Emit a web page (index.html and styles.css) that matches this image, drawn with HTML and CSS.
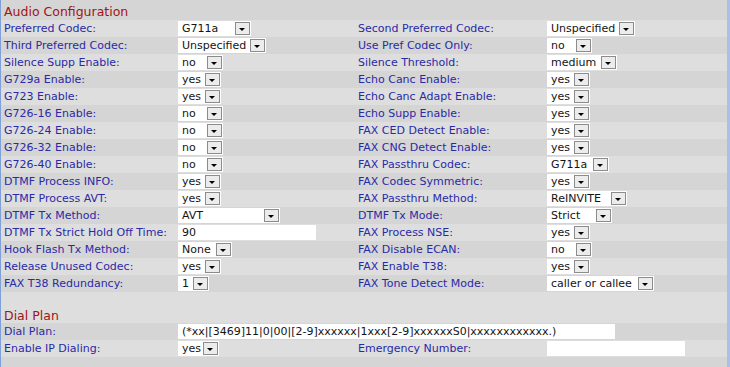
FILE: index.html
```html
<!DOCTYPE html>
<html>

<head>
    <meta name="viewport" content="width=device-width, initial-scale=1">
    <title>Audio Configuration</title>

    <link rel="stylesheet" href="styles.css">

</head>

<body>
    <div class="page">

        <div class="section">
            <div class="head top">Audio Configuration</div>

            <div class="rows">
                <div class="row">
                    <span class="lbl">Preferred Codec:</span>
                    <span class="val"><span class="sel w73">G711a<i class="arr"></i></span></span>
                    <span class="lbl">Second Preferred Codec:</span>
                    <span class="val"><span class="sel w88">Unspecified<i class="arr"></i></span></span>
                </div>
                <div class="row">
                    <span class="lbl">Third Preferred Codec:</span>
                    <span class="val"><span class="sel w88">Unspecified<i class="arr"></i></span></span>
                    <span class="lbl">Use Pref Codec Only:</span>
                    <span class="val"><span class="sel w45">no<i class="arr"></i></span></span>
                </div>
                <div class="row">
                    <span class="lbl">Silence Supp Enable:</span>
                    <span class="val"><span class="sel w45">no<i class="arr"></i></span></span>
                    <span class="lbl">Silence Threshold:</span>
                    <span class="val"><span class="sel w70">medium<i class="arr"></i></span></span>
                </div>
                <div class="row">
                    <span class="lbl">G729a Enable:</span>
                    <span class="val"><span class="sel w43">yes<i class="arr"></i></span></span>
                    <span class="lbl">Echo Canc Enable:</span>
                    <span class="val"><span class="sel w43">yes<i class="arr"></i></span></span>
                </div>
                <div class="row">
                    <span class="lbl">G723 Enable:</span>
                    <span class="val"><span class="sel w43">yes<i class="arr"></i></span></span>
                    <span class="lbl">Echo Canc Adapt Enable:</span>
                    <span class="val"><span class="sel w43">yes<i class="arr"></i></span></span>
                </div>
                <div class="row">
                    <span class="lbl">G726-16 Enable:</span>
                    <span class="val"><span class="sel w45">no<i class="arr"></i></span></span>
                    <span class="lbl">Echo Supp Enable:</span>
                    <span class="val"><span class="sel w43">yes<i class="arr"></i></span></span>
                </div>
                <div class="row">
                    <span class="lbl">G726-24 Enable:</span>
                    <span class="val"><span class="sel w45">no<i class="arr"></i></span></span>
                    <span class="lbl">FAX CED Detect Enable:</span>
                    <span class="val"><span class="sel w43">yes<i class="arr"></i></span></span>
                </div>
                <div class="row">
                    <span class="lbl">G726-32 Enable:</span>
                    <span class="val"><span class="sel w45">no<i class="arr"></i></span></span>
                    <span class="lbl">FAX CNG Detect Enable:</span>
                    <span class="val"><span class="sel w43">yes<i class="arr"></i></span></span>
                </div>
                <div class="row">
                    <span class="lbl">G726-40 Enable:</span>
                    <span class="val"><span class="sel w45">no<i class="arr"></i></span></span>
                    <span class="lbl">FAX Passthru Codec:</span>
                    <span class="val"><span class="sel w62">G711a<i class="arr"></i></span></span>
                </div>
                <div class="row">
                    <span class="lbl">DTMF Process INFO:</span>
                    <span class="val"><span class="sel w43">yes<i class="arr"></i></span></span>
                    <span class="lbl">FAX Codec Symmetric:</span>
                    <span class="val"><span class="sel w43">yes<i class="arr"></i></span></span>
                </div>
                <div class="row">
                    <span class="lbl">DTMF Process AVT:</span>
                    <span class="val"><span class="sel w43">yes<i class="arr"></i></span></span>
                    <span class="lbl">FAX Passthru Method:</span>
                    <span class="val"><span class="sel w80">ReINVITE<i class="arr"></i></span></span>
                </div>
                <div class="row">
                    <span class="lbl">DTMF Tx Method:</span>
                    <span class="val"><span class="sel w102">AVT<i class="arr"></i></span></span>
                    <span class="lbl">DTMF Tx Mode:</span>
                    <span class="val"><span class="sel w65">Strict<i class="arr"></i></span></span>
                </div>
                <div class="row">
                    <span class="lbl">DTMF Tx Strict Hold Off Time:</span>
                    <span class="val"><span class="txt w138">90</span></span>
                    <span class="lbl">FAX Process NSE:</span>
                    <span class="val"><span class="sel w43">yes<i class="arr"></i></span></span>
                </div>
                <div class="row">
                    <span class="lbl">Hook Flash Tx Method:</span>
                    <span class="val"><span class="sel w54">None<i class="arr"></i></span></span>
                    <span class="lbl">FAX Disable ECAN:</span>
                    <span class="val"><span class="sel w45">no<i class="arr"></i></span></span>
                </div>
                <div class="row">
                    <span class="lbl">Release Unused Codec:</span>
                    <span class="val"><span class="sel w43">yes<i class="arr"></i></span></span>
                    <span class="lbl">FAX Enable T38:</span>
                    <span class="val"><span class="sel w43">yes<i class="arr"></i></span></span>
                </div>
                <div class="row">
                    <span class="lbl">FAX T38 Redundancy:</span>
                    <span class="val"><span class="sel w31">1<i class="arr"></i></span></span>
                    <span class="lbl">FAX Tone Detect Mode:</span>
                    <span class="val"><span class="sel w107">caller or callee<i class="arr"></i></span></span>
                </div>
            </div>
        </div>

        <div class="section">
            <div class="head gap">Dial Plan</div>

            <div class="rows">
                <div class="row">
                    <span class="lbl">Dial Plan:</span>
                    <span class="val wide"><span class="txt w437">(*xx|[3469]11|0|00|[2-9]xxxxxx|1xxx[2-9]xxxxxxS0|xxxxxxxxxxxx.)</span></span>
                </div>
                <div class="row">
                    <span class="lbl">Enable IP Dialing:</span>
                    <span class="val"><span class="sel w41">yes<i class="arr"></i></span></span>
                    <span class="lbl">Emergency Number:</span>
                    <span class="val"><span class="txt w138"></span></span>
                </div>
                <div class="row"></div>
            </div>
        </div>

    </div>
</body>

</html>
```

FILE: styles.css
```css
body {
    margin: 0;
    font-family: "DejaVu Sans", Verdana, sans-serif;
    font-size: 11px;
}

.page {
    width: 726px;
    height: 367px;
    border-left: 1px solid #7f9fd8;
    border-right: 3px solid #a9c0e8;
    background-color: #d5d5d5;
    overflow: hidden;
}

.head {
    color: #a01414;
    font-size: 12.5px;
    padding-left: 3px;
    background-color: #d5d5d5;
}

.head.top {
    height: 20px;
    line-height: 24px;
}

.head.gap {
    height: 31px;
    line-height: 47px;
    background-color: #dedede;
}

.row {
    display: grid;
    grid-template-columns: 174px 180px 189px 1fr;
    align-items: center;
    height: 17px;
    padding-left: 3px;
    color: #2a2aa6;
}

.rows .row:nth-child(odd) {
    background-color: #dedede;
}

.rows .row:nth-child(even) {
    background-color: #d5d5d5;
}

.section + .section .rows .row:nth-child(odd) {
    background-color: #d5d5d5;
}

.section + .section .rows .row:nth-child(even) {
    background-color: #dedede;
}

.val {
    display: flex;
    align-items: center;
}

.val.wide {
    grid-column: 2 / 5;
}

.sel,
.txt {
    display: flex;
    align-items: center;
    height: 15px;
    box-sizing: border-box;
    padding-left: 4px;
    background-color: #ffffff;
    color: #141414;
    white-space: nowrap;
}

.arr {
    position: relative;
    margin-left: auto;
    margin-right: 1px;
    width: 15px;
    height: 13px;
    box-sizing: border-box;
    border: 1px solid #8c8c8c;
    background-color: #ececec;
}

.arr:before {
    position: absolute;
    content: "";
    left: 3px;
    top: 5px;
    border-left: 3px solid transparent;
    border-right: 3px solid transparent;
    border-top: 3px solid #000000;
}

.w31 { width: 31px; }
.w41 { width: 41px; }
.w43 { width: 43px; }
.w45 { width: 45px; }
.w54 { width: 54px; }
.w62 { width: 62px; }
.w65 { width: 65px; }
.w70 { width: 70px; }
.w73 { width: 73px; }
.w80 { width: 80px; }
.w88 { width: 88px; }
.w102 { width: 102px; }
.w107 { width: 107px; }
.w138 { width: 138px; }
.w437 { width: 437px; }
```
